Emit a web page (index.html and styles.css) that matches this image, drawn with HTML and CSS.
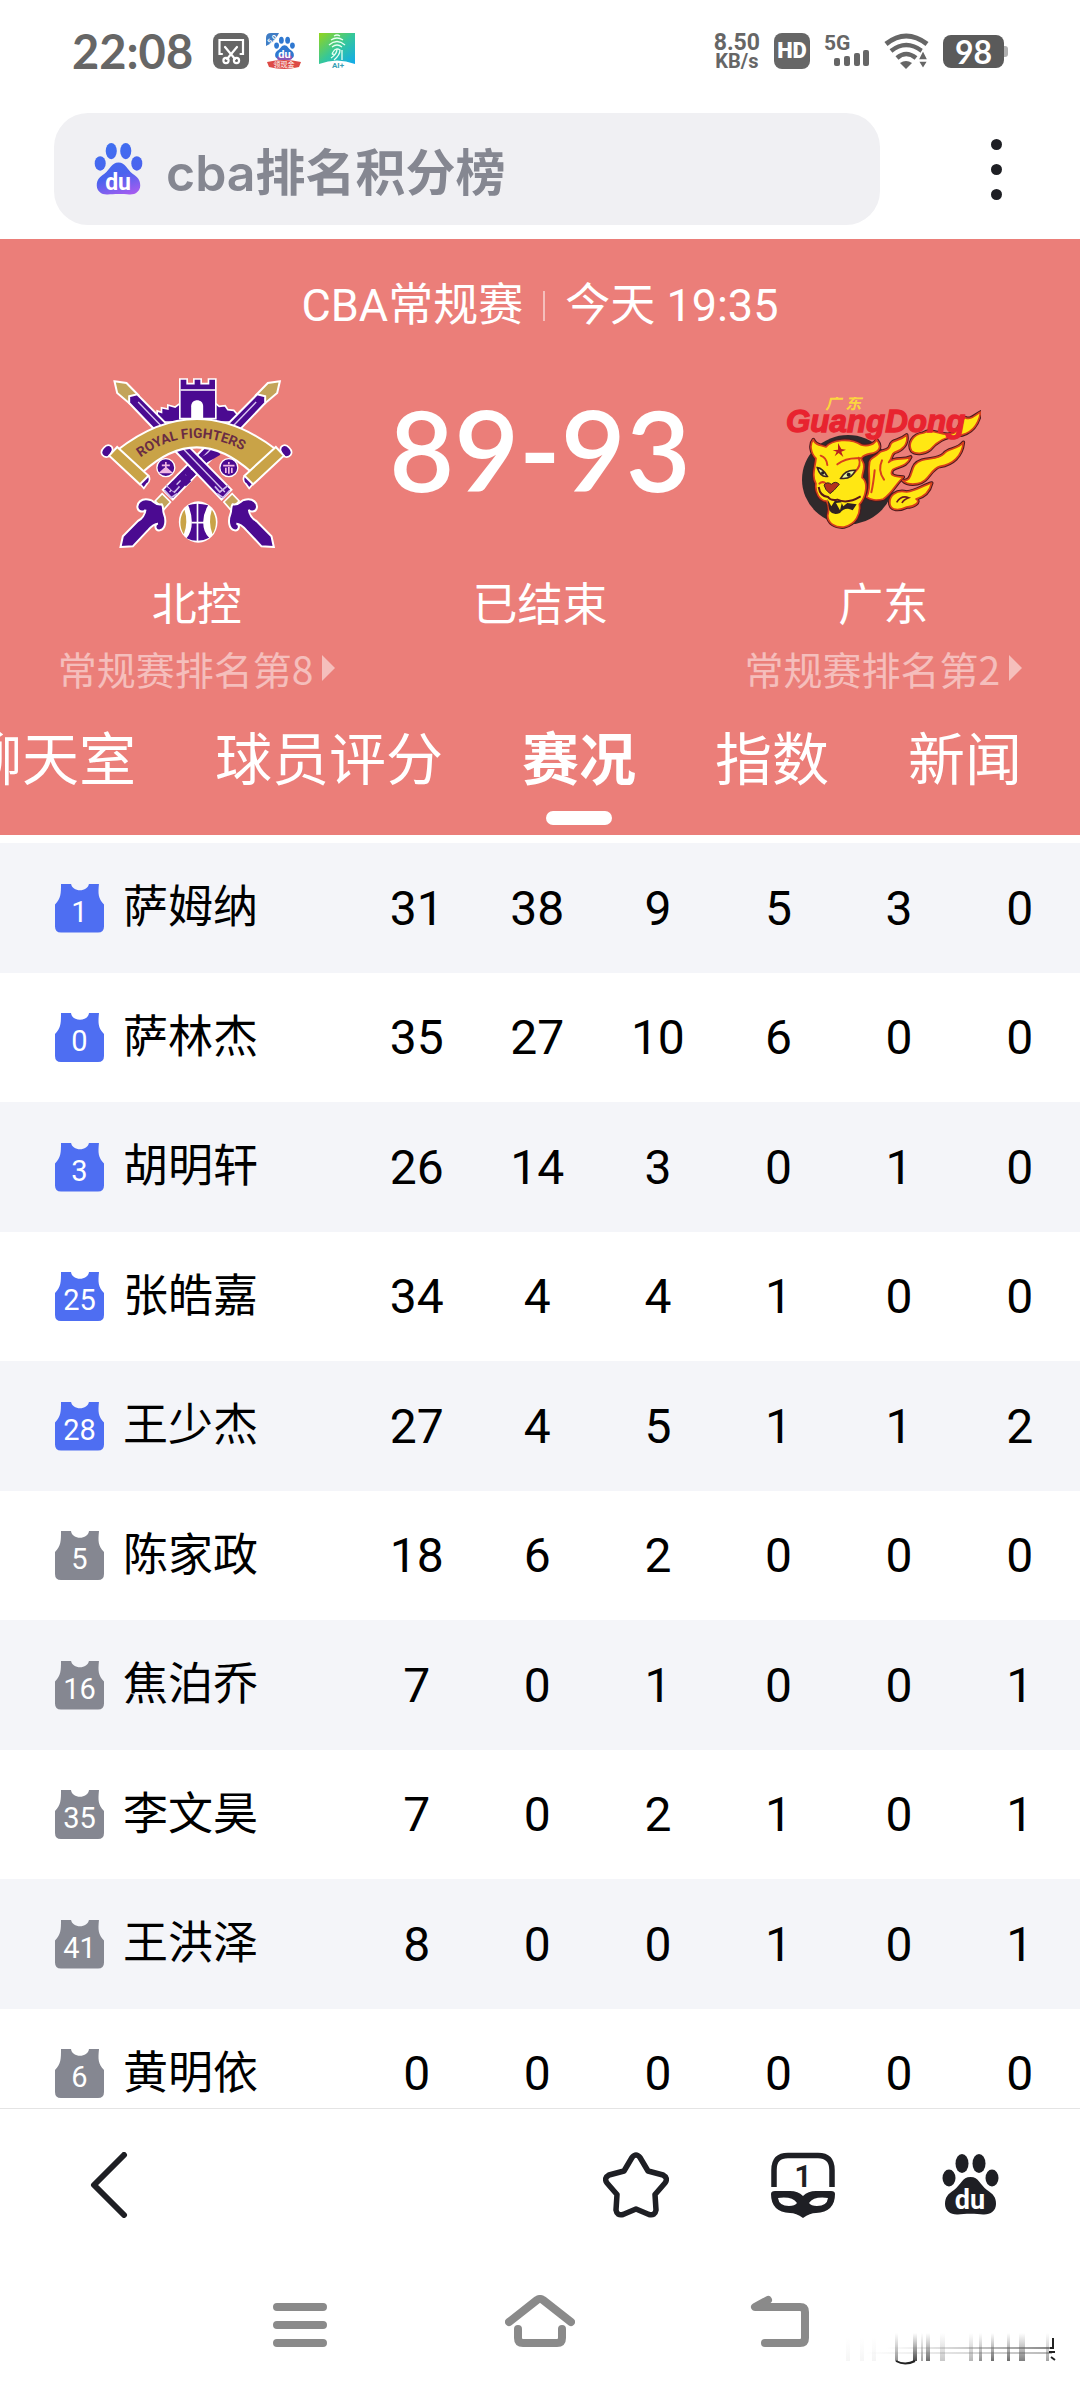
FILE: index.html
```html
<!DOCTYPE html>
<html lang="zh-CN">
<head>
  <meta charset="UTF-8" />
  <meta name="viewport" content="width=device-width, initial-scale=1.0" />
  <title>cba排名积分榜</title>
  <link rel="stylesheet" href="styles.css">
</head>
<body>
  <!-- Shared shapes -->
  <svg class="defs" width="0" height="0" aria-hidden="true">
    <defs>
      <linearGradient id="pawBlue" gradientUnits="userSpaceOnUse" x1="20" y1="0" x2="40" y2="61">
        <stop offset="0" stop-color="#3f6ff0" />
        <stop offset="0.6" stop-color="#4b63ee" />
        <stop offset="1" stop-color="#a45cf0" />
      </linearGradient>
      <symbol id="paw" viewBox="0 0 57 61">
        <ellipse cx="7" cy="24" rx="6.5" ry="8.5" />
        <ellipse cx="20" cy="9.5" rx="6.5" ry="9.5" />
        <ellipse cx="37" cy="9.5" rx="6.5" ry="9.5" />
        <ellipse cx="50" cy="24" rx="6.5" ry="8.5" />
        <path d="M28.5 23C20 23 19 31 12 36C6 40 3 43 3 50C3 57 9 61 16 60.5C22 59.5 35 59.5 41 60.5C48 61 54 57 54 50C54 43 51 40 45 36C38 31 37 23 28.5 23Z" />
      </symbol>
    </defs>
  </svg>

  <div class="screen">
    <div class="status-bar">
      <span class="clock">22:08</span>
      <svg class="status-icon" viewBox="0 0 36 36">
        <rect width="36" height="36" rx="8" fill="#666" />
        <g fill="none" stroke="#fff" stroke-width="2.2" stroke-linecap="round">
          <path d="M9 21H6.5V7H30V21H27.5" />
          <path d="M12 14L22 26M24 14L14 26" />
          <circle cx="13" cy="27.5" r="2.6" />
          <circle cx="23.5" cy="27.5" r="2.6" />
        </g>
      </svg>
      <svg class="status-icon" viewBox="0 0 36 36">
        <path d="M0 13V5Q0 0 5 0H13Q9 9 0 13Z" fill="#3f7cc4" />
        <text x="2" y="10" font-size="7" font-weight="700" fill="#fff" transform="rotate(-42 5 8)">5.0</text>
        <svg x="8" y="3" width="21" height="24" fill="#2f78d0"><use href="#paw" /></svg>
        <path d="M12 23Q18 21 26 23Q27 27 23 27H13Q10 27 12 23Z" fill="#8a55b4" />
        <text x="18.5" y="25" text-anchor="middle" font-size="11" font-weight="700" fill="#fff">du</text>
        <path d="M1 29Q18 25 35 29L33 34Q18 38 3 34Z" fill="#dd4a45" />
        <text x="18" y="34" text-anchor="middle" font-size="7" fill="#fff">领现金</text>
      </svg>
      <svg class="status-icon" viewBox="0 0 36 36">
        <defs>
          <linearGradient id="aiBg" x1="0" y1="0" x2="1" y2="1">
            <stop offset="0" stop-color="#93d51b" />
            <stop offset="0.5" stop-color="#35c79a" />
            <stop offset="1" stop-color="#10a9ee" />
          </linearGradient>
        </defs>
        <path d="M0 0H36V31Q18 24 0 31Z" fill="url(#aiBg)" />
        <g fill="none" stroke="#e8fff2" stroke-width="1.3">
          <path d="M15 3Q18 1 21 3M12 7Q18 3 24 7M10 12Q18 5 26 12M13 14Q18 10 23 14M12 25Q18 21 18 16M15 27Q21 22 21 17Q17 14 14 19Q12 22 15 21M23 17V27" />
        </g>
        <text x="19" y="35" text-anchor="middle" font-size="8" font-weight="700" fill="#3a9fb4">AI+</text>
      </svg>

      <div class="status-right">
        <span class="net-speed"><span>8.50</span><span class="unit">KB/s</span></span>
        <span class="hd">HD</span>
        <svg class="signal" viewBox="0 0 46 34">
          <text x="0" y="16" font-size="21" font-weight="700">5G</text>
          <rect x="10" y="24" width="6" height="8" rx="2" />
          <rect x="20" y="22" width="6" height="10" rx="2" />
          <rect x="30" y="19" width="6" height="13" rx="2" />
          <rect x="39" y="16" width="6" height="16" rx="2" />
        </svg>
        <svg class="wifi" viewBox="0 0 45 36">
          <g fill="none" stroke="#666" stroke-width="5">
            <path d="M2 11Q22 -5 43 11" />
            <path d="M7 18Q22 6 38 18" stroke-width="4.5" />
            <path d="M13 25Q22 17 32 25" stroke-width="4.5" />
          </g>
          <path d="M16 30Q22 26 28 30L22 36Z" />
          <path d="M34 27L39 17L44 27ZM34 28H44L39 36Z" stroke="#fff" stroke-width="1.5" />
        </svg>
        <span class="battery">98</span>
      </div>
    </div>

    <form class="search-row" onsubmit="return false">
      <label class="search-box">
        <svg class="search-logo" viewBox="0 0 57 61" role="img" aria-label="百度">
          <g fill="url(#pawBlue)"><use href="#paw" /></g>
          <text x="28" y="55" text-anchor="middle" font-size="27" font-weight="700" fill="#fff">du</text>
        </svg>
        <input type="text" class="search-input" value="cba排名积分榜" aria-label="搜索">
      </label>
      <button type="button" class="more-btn" aria-label="更多"><i></i><i></i><i></i></button>
    </form>

    <!-- Match header -->
    <header class="match">
      <div class="match-info"><span>CBA常规赛</span><span class="divider"></span><span>今天 19:35</span></div>

      <div class="scoreboard">
        <div class="team">
          <div class="crest">
            <svg width="195" height="170" viewBox="58 83 584 510" role="img" aria-label="北控">
              <defs>
                <g id="sword">
                  <path d="M104 93L140 98L176 135L150 160L112 128Z" fill="#c3a45a" stroke="#fff" stroke-width="6" />
                  <path d="M148 138L172 132L455 418L425 448L148 158Z" fill="#4b0a91" stroke="#fff" stroke-width="6" />
                  <path d="M175 155L435 425" stroke="#d9c6f0" stroke-width="4" />
                  <path d="M405 408L420 425L445 405M412 430L430 442L450 420" fill="none" stroke="#cdb7ea" stroke-width="5" />
                  <path d="M432 455L457 430L478 452L452 478Z" fill="#c3a45a" stroke="#fff" stroke-width="5" />
                  <path d="M458 462C480 466 484 450 492 449C520 440 536 460 530 476C524 488 508 484 507 478C508 492 518 506 530 512L575 558L582 590L545 588L500 540C486 524 478 520 470 520C482 524 478 542 464 540C446 536 444 510 452 490C456 480 452 470 458 462Z" fill="#4b0a91" stroke="#fff" stroke-width="6" />
                </g>
                <g id="scroll">
                  <path d="M72 292C84 278 100 286 98 300L90 318C70 326 56 308 72 292Z" fill="#4b0a91" stroke="#fff" stroke-width="5" />
                  <path d="M178 398L200 374C214 378 210 396 202 400L192 414Z" fill="#4b0a91" stroke="#fff" stroke-width="5" />
                  <path d="M88 316L112 290L206 376L180 402Z" fill="#c9a347" stroke="#fff" stroke-width="6" />
                </g>
                <path id="bannerText" d="M182 322Q350 196 550 338" />
              </defs>
              <path d="M232 205V182L245 186V172L264 176V164L286 170L300 160H408L418 168L436 166L444 178L462 180L474 194V215H232Z" fill="#4b0a91" stroke="#fff" stroke-width="5" />
              <use href="#sword" transform="matrix(-1 0 0 1 704 0)" />
              <path d="M272 400L288 416M300 372L326 400M318 358L340 380" stroke="#4b0a91" stroke-width="22" />
              <path d="M370 330L396 316L416 304" stroke="#4b0a91" stroke-width="22" />
              <use href="#sword" />
              <path d="M300 86H322V100H342V86H364V100H386V86H408V205H300Z" fill="#4b0a91" stroke="#fff" stroke-width="5" />
              <path d="M302 119H406" stroke="#fff" stroke-width="4" />
              <path d="M334 215V168C334 144 370 144 370 168V215Z" fill="#fff" />
              <path d="M112 300Q350 112 592 300L515 366Q350 216 188 366Z" fill="#c9a347" stroke="#fff" stroke-width="6" />
              <use href="#scroll" />
              <use href="#scroll" transform="matrix(-1 0 0 1 700 0)" />
              <text font-size="41" font-weight="700" fill="#6a2c43"><textPath href="#bannerText">ROYAL FIGHTERS</textPath></text>
              <g stroke="#fff" stroke-width="4" fill="#4b0a91">
                <circle cx="258" cy="352" r="27" />
                <circle cx="447" cy="352" r="27" />
              </g>
              <path d="M258 335V352M246 345H270M258 352L242 366H274ZM447 335V342M430 346H464M438 352V368M447 350V370M456 352V368" fill="#f0b6e4" stroke="#f0b6e4" stroke-width="5" />
              <ellipse cx="355" cy="515" rx="58" ry="62" fill="#fff" />
              <path d="M325 465Q350 455 385 465Q370 490 370 515Q370 545 388 562Q355 580 320 564Q336 545 336 515Q336 490 325 465Z" fill="#4b0a91" />
              <path d="M314 478Q326 515 312 552C298 530 298 500 314 478ZM396 478Q384 515 398 552C412 530 412 500 396 478Z" fill="#c9a347" />
              <path d="M353 456V575M335 517H373" stroke="#fff" stroke-width="5" />
            </svg>
          </div>
          <div class="team-name">北控</div>
          <a href="#" class="rank">常规赛排名第8<i class="caret"></i></a>
        </div>

        <div class="team">
          <div class="crest"><span class="score">89-93</span></div>
          <div class="team-name">已结束</div>
        </div>

        <div class="team">
          <div class="crest">
            <svg width="195" height="132" viewBox="78 80 585 396" role="img" aria-label="广东">
              <defs>
                <g id="tiger">
                  <path d="M328 285C326 262 345 262 355 250C365 236 385 246 390 228C394 206 415 216 440 194C446 222 425 240 404 246C392 252 398 262 386 276C408 258 428 272 452 260C438 292 414 286 398 298C386 314 402 320 430 320C408 340 398 366 370 386C350 392 330 388 320 380C336 350 324 310 328 285Z" />
                  <path d="M455 242C442 220 458 192 490 188C520 170 548 204 582 188C602 174 600 148 616 142C632 150 642 136 662 125C656 160 636 192 592 196C552 200 530 214 510 238C492 252 465 252 455 242Z" />
                  <path d="M428 330C456 336 452 300 464 284C488 256 530 274 552 250C565 232 592 240 610 216C606 258 578 282 540 288C510 296 508 334 472 340C455 343 438 340 428 330Z" />
                  <path d="M390 402C386 376 408 358 440 365C470 362 490 345 515 338C508 368 490 380 468 386C484 394 462 410 440 410C416 422 394 420 390 402Z" />
                  <path d="M160 208C166 226 184 224 198 230C216 208 270 202 304 224C324 230 344 222 350 208C366 228 360 246 330 250C304 256 300 264 308 274C318 290 306 306 306 322C326 336 318 380 298 402C302 430 288 462 252 470C224 472 204 458 203 436C208 420 206 404 200 392C180 392 164 366 168 340C154 316 166 290 168 264C152 248 148 222 160 208Z" />
                </g>
              </defs>
              <ellipse cx="264" cy="328" rx="138" ry="134" fill="#2f292b" />
              <use href="#tiger" stroke="#4a1a20" stroke-width="11" stroke-linejoin="round" />
              <use href="#tiger" fill="#ffe713" stroke="#d8401c" stroke-width="5" stroke-linejoin="round" />
              <g fill="none" stroke="#d8401c" stroke-width="6" stroke-linecap="round">
                <path d="M182 256Q200 262 202 284M232 282Q260 260 302 264M296 262Q306 286 284 306M344 300Q340 340 334 366M366 270Q352 300 372 328M178 340Q186 332 196 338" />
              </g>
              <path d="M218 240L234 238L234 218L244 236L258 238L244 244L250 260L236 248L224 258L230 244Z" fill="#b8201f" />
              <path d="M172 292Q188 294 202 318Q182 322 172 292ZM242 324Q256 298 286 300Q276 328 242 324Z" fill="#e7f59b" stroke="#3b2320" stroke-width="5" />
              <circle cx="188" cy="308" r="5" fill="#222" />
              <circle cx="266" cy="313" r="6" fill="#222" />
              <path d="M192 344Q202 332 214 342Q226 330 238 342L222 360L210 370L198 358Z" fill="#b4321d" stroke="#3b2320" stroke-width="3" />
              <path d="M176 350Q180 378 204 380Q212 392 232 388Q262 402 302 378" fill="none" stroke="#5b1718" stroke-width="6" />
              <path d="M202 386L214 408L224 392H242L250 408L262 398L290 402L278 420Q256 408 240 428Q218 436 208 420Z" fill="#2f2021" />
              <path d="M228 398L240 420L246 396Z" fill="#ffe713" />
              <path d="M410 396Q424 374 446 382Q430 388 426 398" fill="none" stroke="#6d1a1e" stroke-width="5" />
              <text x="78" y="184" font-family="Liberation Sans" font-size="94" font-weight="700" font-style="italic" fill="#e8232f" stroke="#e8232f" stroke-width="4">GuangDong</text>
              <text x="196" y="117" font-size="48" font-style="italic" font-weight="700" fill="#fbd53f">广 东</text>
            </svg>
          </div>
          <div class="team-name">广东</div>
          <a href="#" class="rank">常规赛排名第2<i class="caret"></i></a>
        </div>
      </div>

      <nav class="tabs">
        <a href="#">聊天室</a>
        <a href="#">球员评分</a>
        <a href="#" class="active">赛况</a>
        <a href="#">指数</a>
        <a href="#">新闻</a>
      </nav>
    </header>

    <!-- Player stats -->
    <main class="stats">
      <table>
        <tbody>
          <tr><th scope="row"><div class="player"><span class="jersey starter">1</span>萨姆纳</div></th><td>31</td><td>38</td><td>9</td><td>5</td><td>3</td><td>0</td></tr>
          <tr><th scope="row"><div class="player"><span class="jersey starter">0</span>萨林杰</div></th><td>35</td><td>27</td><td>10</td><td>6</td><td>0</td><td>0</td></tr>
          <tr><th scope="row"><div class="player"><span class="jersey starter">3</span>胡明轩</div></th><td>26</td><td>14</td><td>3</td><td>0</td><td>1</td><td>0</td></tr>
          <tr><th scope="row"><div class="player"><span class="jersey starter">25</span>张皓嘉</div></th><td>34</td><td>4</td><td>4</td><td>1</td><td>0</td><td>0</td></tr>
          <tr><th scope="row"><div class="player"><span class="jersey starter">28</span>王少杰</div></th><td>27</td><td>4</td><td>5</td><td>1</td><td>1</td><td>2</td></tr>
          <tr><th scope="row"><div class="player"><span class="jersey">5</span>陈家政</div></th><td>18</td><td>6</td><td>2</td><td>0</td><td>0</td><td>0</td></tr>
          <tr><th scope="row"><div class="player"><span class="jersey">16</span>焦泊乔</div></th><td>7</td><td>0</td><td>1</td><td>0</td><td>0</td><td>1</td></tr>
          <tr><th scope="row"><div class="player"><span class="jersey">35</span>李文昊</div></th><td>7</td><td>0</td><td>2</td><td>1</td><td>0</td><td>1</td></tr>
          <tr><th scope="row"><div class="player"><span class="jersey">41</span>王洪泽</div></th><td>8</td><td>0</td><td>0</td><td>1</td><td>0</td><td>1</td></tr>
          <tr><th scope="row"><div class="player"><span class="jersey">6</span>黄明依</div></th><td>0</td><td>0</td><td>0</td><td>0</td><td>0</td><td>0</td></tr>
        </tbody>
      </table>
    </main>

    <!-- Browser toolbar -->
    <div class="toolbar">
      <button type="button" class="back" aria-label="后退">
        <svg width="66" height="66" viewBox="0 0 66 66"><path d="M47 3L17 33L47 63" fill="none" stroke="#1e1f24" stroke-width="6" stroke-linecap="round" stroke-linejoin="round" /></svg>
      </button>
      <button type="button" aria-label="收藏">
        <svg width="66" height="66" viewBox="0 0 66 66"><path d="M29 5.5Q33 0.5 37 5.5L45 19L60 23Q65.5 26 62 31L52 42.500L53 58Q52 64 46 62.5L33 57L20 62.5Q14 64 13 58L14 42.5L4 31Q0.5 26 6 23L21 19Z" fill="none" stroke="#1e1f24" stroke-width="5.5" stroke-linejoin="round" /></svg>
      </button>
      <button type="button" aria-label="窗口">
        <svg width="66" height="66" viewBox="0 0 66 66">
          <path d="M4 35V18Q4 3.5 18 3.5H48Q62 3.5 62 18V35" fill="none" stroke="#1e1f24" stroke-width="5.5" />
          <text x="33" y="35" text-anchor="middle" font-size="31" font-weight="600" fill="#1e1f24">1</text>
          <path fill-rule="evenodd" d="M1 42Q1 39 5 39H20Q28 39 33 44Q38 39 46 39H61Q65 39 65 42Q65 60 46 61Q40 61 33 66Q26 61 20 61Q1 60 1 42ZM8 46Q9 54 19 54Q25 54 27 51Q22 44 8 46ZM58 46Q57 54 47 54Q41 54 39 51Q44 44 58 46Z" fill="#1e1f24" />
        </svg>
      </button>
      <button type="button" aria-label="首页">
        <svg width="57" height="61" viewBox="0 0 57 61" fill="#1e1f24">
          <use href="#paw" />
          <text x="28" y="55" text-anchor="middle" font-size="27" font-weight="700" fill="#fff">du</text>
        </svg>
      </button>
    </div>

    <!-- System navigation -->
    <div class="system-nav">
      <button type="button" aria-label="菜单">
        <svg width="70" height="56" viewBox="0 0 70 56"><path d="M12 12H58M12 30H58M12 48H58" /></svg>
      </button>
      <button type="button" aria-label="主屏幕">
        <svg width="70" height="56" viewBox="0 0 70 56"><path d="M4 27L32 5Q35 3 38 5L66 27M13 34V43Q13 48 18 48H52Q57 48 57 43V34" /></svg>
      </button>
      <button type="button" aria-label="返回">
        <svg width="70" height="56" viewBox="0 0 70 56"><path d="M23 5L10 12H55Q60 12 60 17V43Q60 48 55 48H20" /></svg>
      </button>
      <svg class="smear" width="232" height="40" viewBox="0 0 232 40" aria-hidden="true">
        <defs>
          <linearGradient id="fadeDown" x1="0" y1="0" x2="0" y2="1">
            <stop offset="0" stop-color="#555" stop-opacity="0" />
            <stop offset="1" stop-color="#333" stop-opacity="0.9" />
          </linearGradient>
          <linearGradient id="fadeRight" x1="0" y1="0" x2="1" y2="0">
            <stop offset="0" stop-color="#777" stop-opacity="0" />
            <stop offset="1" stop-color="#555" stop-opacity="0.7" />
          </linearGradient>
        </defs>
        <g fill="url(#fadeDown)">
          <rect x="69" y="4" width="3" height="28" opacity="0.6" />
          <rect x="87" y="4" width="4" height="28" />
          <rect x="95" y="4" width="2" height="28" opacity="0.5" />
          <rect x="100" y="4" width="4" height="28" opacity="0.8" />
          <rect x="114" y="4" width="5" height="28" opacity="0.3" />
          <rect x="143" y="4" width="4" height="28" opacity="0.4" />
          <rect x="153" y="4" width="3" height="28" opacity="0.6" />
          <rect x="165" y="4" width="3" height="28" opacity="0.8" />
          <rect x="181" y="4" width="3" height="28" opacity="0.8" />
          <rect x="193" y="4" width="6" height="28" opacity="0.7" />
          <rect x="220" y="4" width="3" height="28" opacity="0.5" />
          <rect x="20" y="8" width="4" height="24" opacity="0.05" />
          <rect x="34" y="8" width="4" height="24" opacity="0.05" />
          <rect x="46" y="8" width="4" height="24" opacity="0.06" />
        </g>
        <rect x="60" y="18" width="166" height="2" fill="url(#fadeRight)" />
        <rect x="40" y="23" width="186" height="2" fill="url(#fadeRight)" opacity="0.6" />
        <path d="M70 32Q79 37 89 32M224 19H227V9M223 23H229M225 28L229 31" fill="none" stroke="#222" stroke-width="2" />
      </svg>
    </div>
  </div>
</body>
</html>
```

FILE: styles.css
```css
/* Base styling */
* { box-sizing: border-box; }
body {
  margin: 0;
  background: #fff;
  font-family: Roboto, "Noto Sans CJK SC", sans-serif;
  color: #000;
}
button {
  border: none;
  background: none;
  padding: 0;
  font: inherit;
  cursor: pointer;
}
a { color: inherit; text-decoration: none; }
svg { display: block; }
.defs { position: absolute; }
.screen {
  display: flex;
  flex-direction: column;
  height: 100vh;
  overflow: hidden;
}

/* Status bar */
.status-bar {
  display: flex;
  align-items: center;
  gap: 17px;
  height: 102px;
  padding: 0 76px 0 72px;
  color: #666;
  fill: #666;
}
.clock {
  font-family: Lato, sans-serif;
  font-size: 47px;
  font-weight: 700;
  line-height: 48px;
  margin-right: 3px;
}
.status-icon { width: 36px; height: 36px; overflow: visible; }
.status-right {
  display: flex;
  align-items: center;
  gap: 14px;
  margin-left: auto;
}
.net-speed {
  display: flex;
  flex-direction: column;
  align-items: center;
  font-size: 23px;
  font-weight: 700;
  line-height: 20px;
}
.net-speed .unit {
  font-size: 20px;
  line-height: 16px;
}
.hd {
  width: 36px;
  border-radius: 8px;
  background: #666;
  color: #fff;
  font-size: 22px;
  font-weight: 900;
  line-height: 36px;
  text-align: center;
}
.signal { width: 46px; height: 34px; overflow: visible; }
.wifi { width: 45px; height: 36px; overflow: visible; }
.battery {
  position: relative;
  width: 61px;
  border-radius: 8px;
  background: #5a5a5a;
  color: #fff;
  font-family: Lato, sans-serif;
  font-size: 32px;
  font-weight: 700;
  line-height: 33px;
  text-align: center;
}
.battery::after {
  content: "";
  position: absolute;
  right: -4px;
  top: 11px;
  width: 4px;
  height: 11px;
  border-radius: 0 3px 3px 0;
  background: #b0b0b0;
}

/* Search */
.search-row {
  display: flex;
  align-items: center;
  margin: 0;
  padding: 11px 54px 14px;
}
.search-box {
  display: flex;
  align-items: center;
  gap: 23px;
  width: 85%;
  height: 112px;
  padding: 0 40px;
  border-radius: 34px;
  background: #f0f0f3;
}
.search-logo { flex: none; width: 49px; height: 52px; }
.search-input {
  flex: 1;
  min-width: 0;
  border: none;
  outline: none;
  padding: 0;
  background: none;
  color: #858791;
  font-family: Inter, "Noto Sans CJK SC", sans-serif;
  font-size: 50px;
  font-weight: 600;
}
.more-btn {
  display: flex;
  flex-direction: column;
  align-items: center;
  gap: 14px;
  width: 60px;
  margin-left: auto;
}
.more-btn i {
  width: 11px;
  height: 11px;
  border-radius: 50%;
  background: #1e1f24;
}

/* Match header */
.match {
  background: #eb7e79;
  color: #fff;
}
.match-info {
  display: flex;
  justify-content: center;
  align-items: center;
  gap: 20px;
  padding-top: 35px;
  font-size: 45px;
  line-height: 64px;
}
.divider { width: 2px; height: 30px; background: rgba(255, 255, 255, 0.5); }
.scoreboard {
  display: grid;
  grid-template-columns: repeat(3, 1fr);
  padding: 25px 25px 0;
}
.team {
  display: flex;
  flex-direction: column;
  align-items: center;
}
.crest {
  display: flex;
  align-items: center;
  height: 200px;
}
.score {
  font-family: Lato, sans-serif;
  font-size: 112px;
  font-weight: 600;
  line-height: 120px;
  padding-bottom: 28px;
}
.team-name {
  font-size: 45px;
  line-height: 64px;
  margin-top: 11px;
}
.rank {
  display: flex;
  align-items: center;
  gap: 9px;
  color: rgba(255, 255, 255, 0.5);
  font-family: "Noto Sans CJK SC", sans-serif;
  font-size: 39px;
  font-weight: 400;
  line-height: 56px;
  margin-top: 2px;
}
.caret {
  border: 13px solid transparent;
  border-left-color: currentColor;
  border-right-width: 0;
}
.tabs {
  display: flex;
  justify-content: flex-end;
  gap: 79px;
  padding: 25px 58px 0 0;
  height: 139px;
  overflow: hidden;
  font-size: 57px;
  line-height: 80px;
}
.tabs a { position: relative; flex: none; }
.tabs .active { font-weight: 700; }
.tabs .active::after {
  content: "";
  position: absolute;
  left: 50%;
  top: 90px;
  width: 66px;
  height: 14px;
  margin-left: -33px;
  border-radius: 7px;
  background: #fff;
}

/* Player stats */
.stats {
  flex: 1;
  min-height: 0;
  overflow: hidden;
  padding-top: 8px;
}
.stats table {
  width: 100%;
  table-layout: fixed;
  border-collapse: collapse;
}
.stats th {
  width: 33%;
  padding: 0 0 0 55px;
  font-size: 45px;
  font-weight: 400;
  text-align: left;
}
.stats td {
  height: 130px;
  padding: 0;
  font-size: 48px;
  text-align: center;
}
.stats tr:nth-child(odd) { background: #f4f5f9; }
.stats tr:nth-child(even) td { height: 129px; }
.player {
  display: flex;
  align-items: center;
  gap: 19px;
  line-height: 64px;
}
.jersey {
  width: 49px;
  height: 49px;
  background: #858791;
  color: #fff;
  font-size: 29px;
  line-height: 57px;
  text-align: center;
  clip-path: path("M6 0H16C17 9 33 9 34 0H44C43 10 43 15 49 21V43Q49 49 43 49H6Q0 49 0 43V21C6 15 6 10 6 0Z");
}
.jersey.starter { background: #4e6ef2; }

/* Browser toolbar */
.toolbar {
  display: flex;
  align-items: center;
  gap: 101px;
  height: 152px;
  padding: 0 77px;
  border-top: 1px solid #e4e4e4;
}
.toolbar button {
  display: flex;
  justify-content: center;
  width: 66px;
}
.toolbar .back { margin-right: auto; }

/* System navigation */
.system-nav {
  position: relative;
  display: flex;
  justify-content: center;
  gap: 170px;
  height: 128px;
  padding-top: 35px;
  align-items: flex-start;
}
.system-nav button path {
  fill: none;
  stroke: #8a8a8a;
  stroke-width: 8;
  stroke-linecap: round;
  stroke-linejoin: round;
}
.smear {
  position: absolute;
  right: 22px;
  bottom: 19px;
}
```
